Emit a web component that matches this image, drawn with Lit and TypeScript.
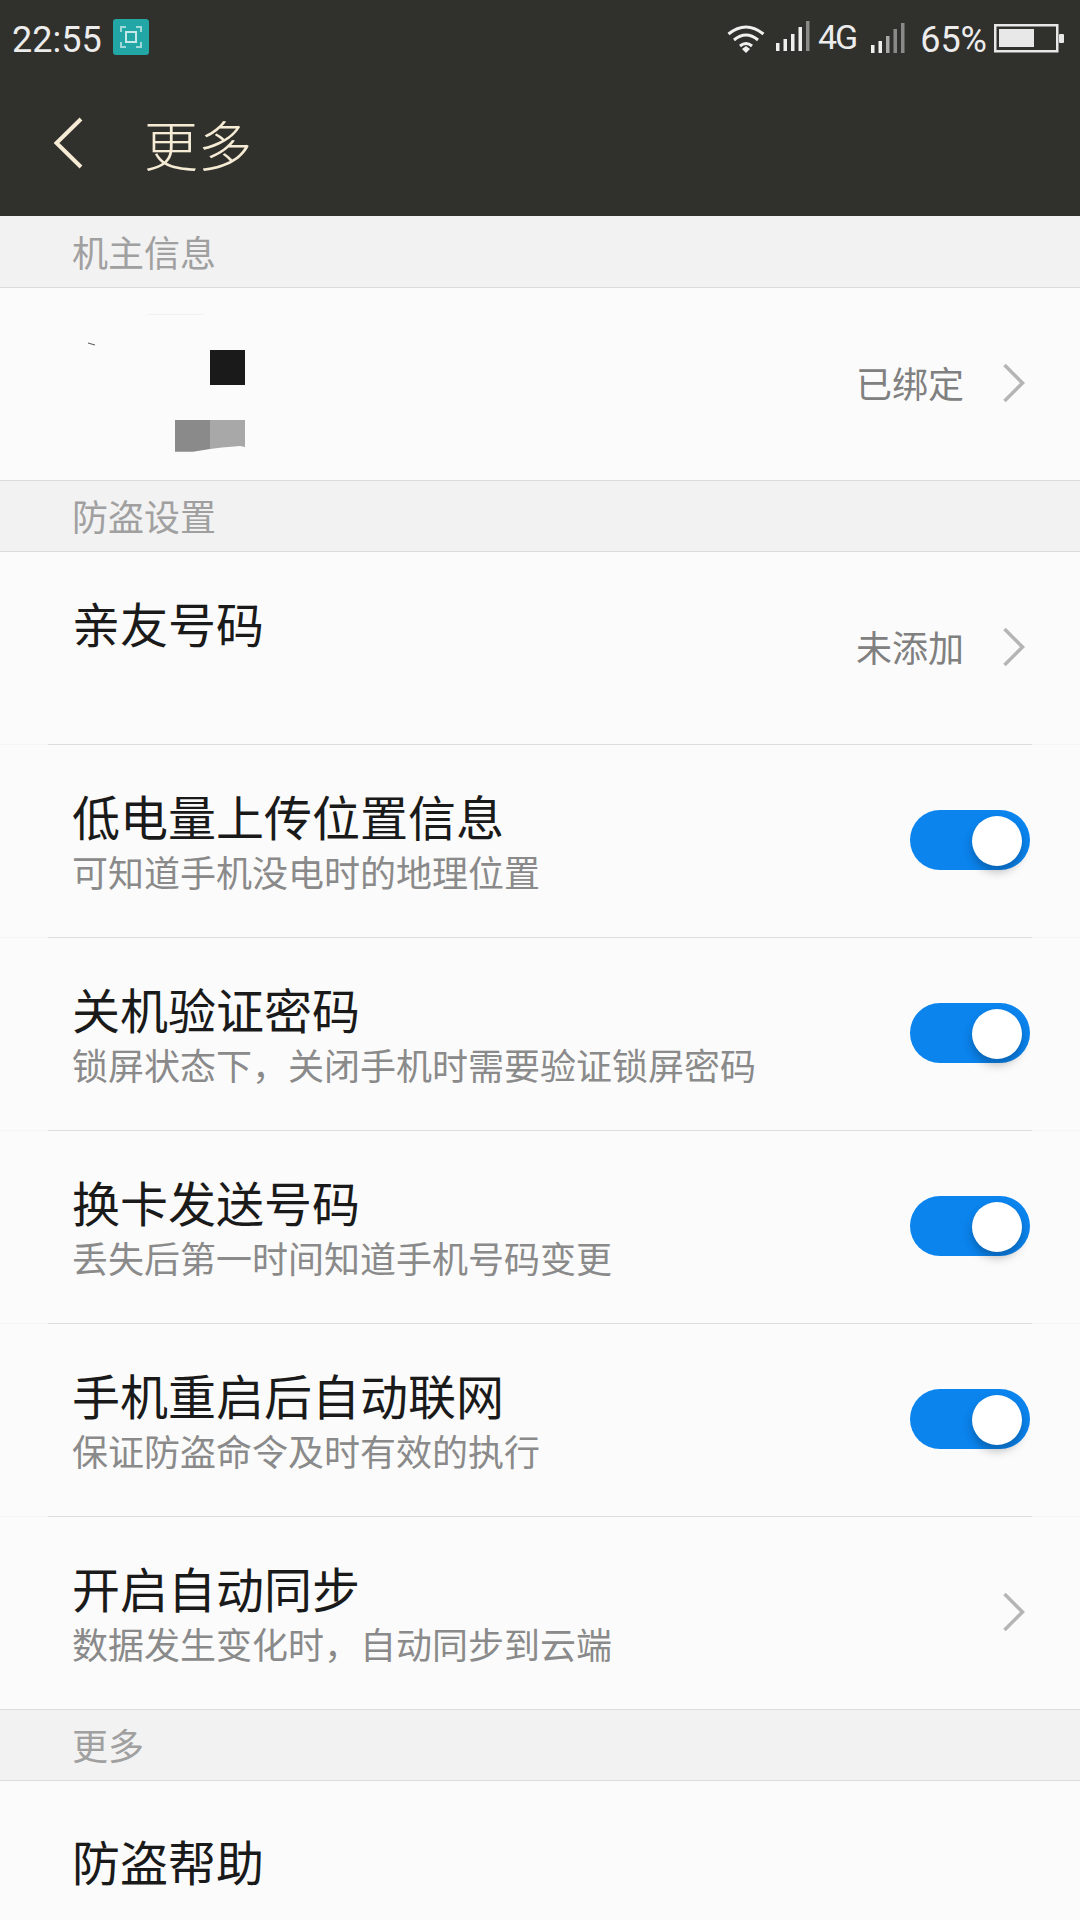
import { LitElement, html, css, svg, nothing } from "lit";
import { customElement } from "lit/decorators.js";

interface Row {
  title: string;
  sub?: string;
  value?: string;
  toggle?: boolean;
  arrow?: boolean;
  cls?: string;
}

const WHITE = "#f0f0ee";
const GREY = "#8a8a88";

const chevron = html`<svg class="chev" width="24" height="40" viewBox="0 0 24 40">
  <path d="M2.5 2 L20.5 20 L2.5 38" fill="none" stroke="#b5b5b5" stroke-width="3.5" />
</svg>`;

const HEIGHTS = [8, 12, 17, 24, 30];

const bars = (fills: string[]) => html`<svg width="34" height="30" viewBox="0 0 34 30">
  ${fills.map(
    (c, i) =>
      svg`<rect x=${i * 7.5} y=${30 - HEIGHTS[i]} width="3.5" height=${HEIGHTS[i]} fill=${c}></rect>`,
  )}
</svg>`;

@customElement("app-root")
export class AppRoot extends LitElement {
  static styles = css`
    :host {
      display: block;
      width: 1080px;
      height: 1920px;
      overflow: hidden;
      background: #fbfbfb;
      font-family: "Noto Sans CJK SC", "Noto Sans", sans-serif;
    }
    .top {
      height: 216px;
      background: #30302c;
      display: flex;
      flex-direction: column;
    }
    .status {
      height: 76px;
      padding: 0 16px 0 12px;
      display: flex;
      align-items: center;
      color: #ececec;
      font-family: Roboto, sans-serif;
      font-size: 36px;
    }
    .time {
      margin-top: 3px;
    }
    .scan {
      width: 36px;
      height: 36px;
      margin-left: 11px;
      margin-top: -2px;
    }
    .right {
      margin-left: auto;
      display: flex;
      align-items: center;
    }
    .wifi,
    .batt {
      margin-top: 2px;
    }
    .sig {
      margin-left: 11px;
      margin-top: 1px;
    }
    .net {
      font-size: 34px;
      margin: -2px 15px 0 8px;
      letter-spacing: -2px;
    }
    .pct {
      margin: 3px 7px 0 15px;
    }
    .bar {
      height: 140px;
      display: flex;
      align-items: center;
      padding-left: 53px;
      color: #f6ebd5;
      font-size: 54px;
      font-weight: 300;
      padding-bottom: 6px;
      box-sizing: border-box;
    }
    .bar svg {
      margin-right: 61px;
    }
    .section {
      height: 72px;
      box-sizing: border-box;
      background: #f2f2f2;
      border-bottom: 1px solid #dcdcdc;
      padding-left: 72px;
      color: #a0a0a0;
      font-size: 36px;
      line-height: 70px;
    }
    .section.next {
      border-top: 1px solid #dcdcdc;
      line-height: 68px;
    }
    .row {
      position: relative;
      height: 193px;
      box-sizing: border-box;
      padding: 0 46px 0 72px;
      display: flex;
      align-items: center;
      border-bottom: 1px solid #f5f5f5;
    }
    .row.plain {
      height: 192px;
      border-bottom: none;
    }
    .row.divided::after {
      content: "";
      position: absolute;
      left: 48px;
      right: 48px;
      bottom: -1px;
      height: 1px;
      background: #dedede;
    }
    .text {
      flex: 1;
      align-self: flex-start;
      display: flex;
      flex-direction: column;
      padding-top: 37px;
    }
    .help .text {
      padding-top: 46px;
    }
    .title {
      color: #1a1a1a;
      font-size: 48px;
      line-height: 66px;
    }
    .sub {
      color: #8a8a8a;
      font-size: 36px;
      line-height: 46px;
    }
    .value {
      color: #808080;
      font-size: 36px;
      line-height: 50px;
      margin-right: 38px;
      margin-bottom: 2px;
    }
    .side {
      display: flex;
      align-items: center;
      margin-top: -3px;
    }
    .chev {
      margin-right: 8px;
    }
    .switch {
      position: relative;
      width: 120px;
      height: 60px;
      border-radius: 30px;
      background: #0b84ee;
      margin-right: 4px;
    }
    .knob {
      position: absolute;
      top: 6px;
      right: 8px;
      width: 50px;
      height: 50px;
      border-radius: 50%;
      background: #fff;
      box-shadow: 0 6px 10px rgba(0, 0, 0, 0.25);
    }
    .blots {
      position: absolute;
      left: 0;
      top: 0;
    }
  `;

  private rows: Row[] = [
    { title: "低电量上传位置信息", sub: "可知道手机没电时的地理位置", toggle: true },
    { title: "关机验证密码", sub: "锁屏状态下，关闭手机时需要验证锁屏密码", toggle: true },
    { title: "换卡发送号码", sub: "丢失后第一时间知道手机号码变更", toggle: true },
    { title: "手机重启后自动联网", sub: "保证防盗命令及时有效的执行", toggle: true },
  ];

  private renderRow(r: Row, divided = true) {
    return html`<div class="row ${divided ? "divided" : "plain"} ${r.cls ?? ""}">
      <div class="text">
        <div class="title">${r.title}</div>
        ${r.sub ? html`<div class="sub">${r.sub}</div>` : nothing}
      </div>
      <div class="side">
        ${r.value ? html`<span class="value">${r.value}</span>` : nothing}
        ${r.arrow ? chevron : nothing}
        ${r.toggle ? html`<div class="switch"><div class="knob"></div></div>` : nothing}
      </div>
    </div>`;
  }

  protected render() {
    return html`
      <div class="top">
        <div class="status">
          <span class="time">22:55</span>
          <svg class="scan" viewBox="0 0 36 36">
            <rect width="36" height="36" rx="3" fill="#23a6a6" />
            <path
              d="M8 13V8h5M23 8h5v5M28 23v5h-5M13 28H8v-5"
              fill="none"
              stroke="#9fd8d8"
              stroke-width="2"
            />
            <rect x="13" y="13" width="10" height="10" fill="none" stroke="#c4e8e8" stroke-width="2" />
          </svg>
          <div class="right">
            <svg class="wifi" width="38" height="30" viewBox="0 0 38 30">
              <path
                d="M1.5 10 Q19 -4 36.5 10M7 16 Q19 6 31 16M13 22 Q19 17 25 22"
                fill="none"
                stroke=${WHITE}
                stroke-width="3"
              />
              <path d="M15 25 L19 22 L23 25 L19 29 Z" fill=${WHITE} />
            </svg>
            <span class="sig">${bars([WHITE, WHITE, WHITE, WHITE, GREY])}</span>
            <span class="net">4G</span>
            ${bars([WHITE, WHITE, "#a8a8a6", GREY, GREY])}
            <span class="pct">65%</span>
            <svg class="batt" width="70" height="30" viewBox="0 0 70 30">
              <rect x="1.25" y="1.25" width="62" height="26" fill="none" stroke="#e8e8e8" stroke-width="2.5" />
              <rect x="5" y="5" width="35" height="18" fill="#e8e8e8" />
              <rect x="65" y="10" width="5" height="9" rx="1" fill="#e8e8e8" />
            </svg>
          </div>
        </div>
        <div class="bar">
          <svg width="30" height="52" viewBox="0 0 30 52">
            <path d="M28 2 L3.5 26 L28 50" fill="none" stroke="#f6ebd5" stroke-width="4" />
          </svg>
          <span>更多</span>
        </div>
      </div>
      <div class="section">机主信息</div>
      <div class="row plain">
        <svg class="blots" width="300" height="192" viewBox="0 0 300 192">
          <rect x="147" y="26" width="56" height="1" fill="#f1f1f1" />
          <path d="M88 55 L95 57" stroke="#555" fill="none" />
          <rect x="210" y="62" width="35" height="35" fill="#1a1a1a" />
          <path d="M175 132H210V161L193 163.7H175Z" fill="#8a8a8a" />
          <path d="M210 132H245V159L240 158L222 159.5L210 161Z" fill="#a8a8a8" />
        </svg>
        <div class="text"></div>
        <div class="side"><span class="value">已绑定</span>${chevron}</div>
      </div>
      <div class="section next">防盗设置</div>
      ${this.renderRow({ title: "亲友号码", value: "未添加", arrow: true })}
      ${this.rows.map((r) => this.renderRow(r))}
      ${this.renderRow({ title: "开启自动同步", sub: "数据发生变化时，自动同步到云端", arrow: true }, false)}
      <div class="section next">更多</div>
      ${this.renderRow({ title: "防盗帮助", cls: "help" }, false)}
    `;
  }
}
